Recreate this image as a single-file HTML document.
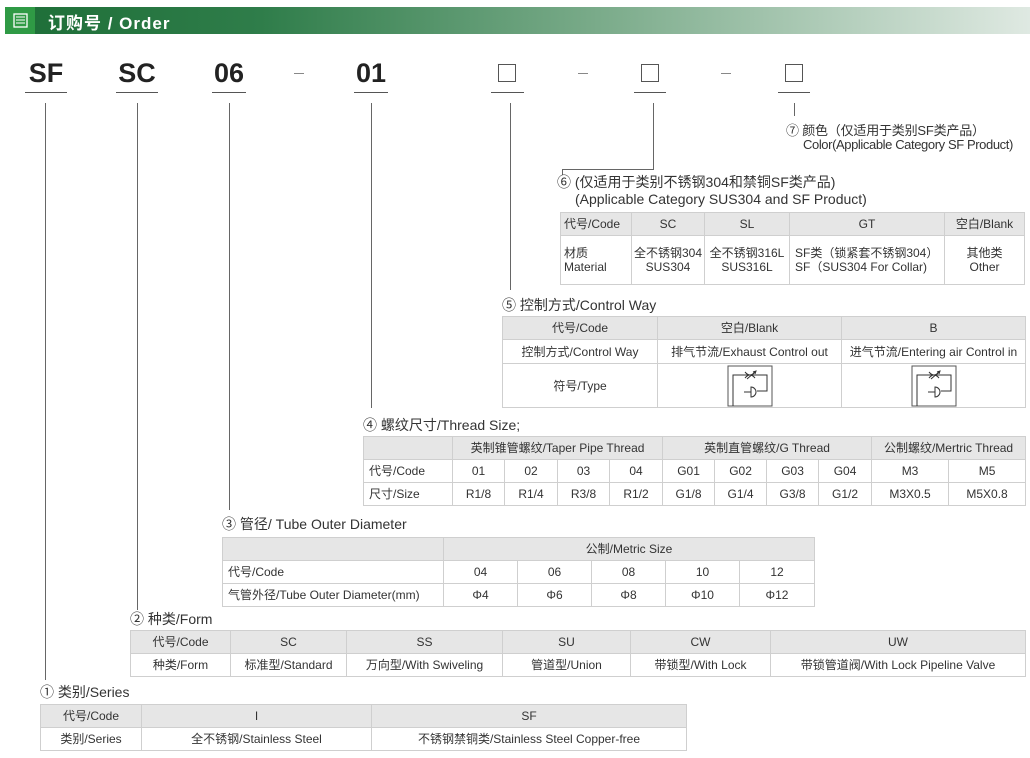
<!DOCTYPE html>
<html><head><meta charset="utf-8"><style>
*{margin:0;padding:0;box-sizing:border-box}
body{width:1030px;height:758px;background:#fff;position:relative;overflow:hidden;font-family:"Liberation Sans","Noto Sans CJK SC",sans-serif;color:#333}
.a{position:absolute}
.hdr{left:5px;top:7px;width:1025px;height:27px;background:linear-gradient(90deg,#1d6e37 0%,#2f7d4a 25%,#7fae8e 60%,#dfe9e2 100%)}
.ico{left:5px;top:7px;width:30px;height:27px;background:#2f9a45}
.title{left:48px;top:9px;color:#fff;font-weight:bold;font-size:17px;letter-spacing:1px}
.code{font-size:27px;font-weight:bold;color:#222;top:58px;text-align:center}
.ul{height:1px;background:#555;top:92px}
.vl{width:1px;background:#666}
.hl{height:1px;background:#666}
.box{width:18px;height:18px;border:1px solid #555;top:64px}
.dash{top:73px;width:10px;height:1px;background:#888}
.lbl{font-size:14px;color:#333;white-space:nowrap}
table{position:absolute;border-collapse:collapse;table-layout:fixed;font-size:12px;color:#333}
td{border:1px solid #cfcfcf;text-align:center;padding:0;line-height:14px;white-space:nowrap;overflow:hidden}
tr.h td{background:#e6e6e6}
</style></head><body>
<div class="a hdr"></div>
<div class="a ico"><svg width="30" height="27"><rect x="9" y="7" width="13" height="13" fill="none" stroke="#fff" stroke-width="1.3"/><path d="M11 10h9M11 13h9M11 16h9" stroke="#fff" stroke-width="1"/></svg></div>
<div class="a title">订购号 / Order</div>

<div class="a code" style="left:25px;width:42px">SF</div>
<div class="a code" style="left:116px;width:42px">SC</div>
<div class="a code" style="left:212px;width:34px">06</div>
<div class="a code" style="left:354px;width:34px">01</div>
<div class="a ul" style="left:25px;width:42px"></div>
<div class="a ul" style="left:116px;width:42px"></div>
<div class="a ul" style="left:212px;width:34px"></div>
<div class="a ul" style="left:354px;width:34px"></div>
<div class="a ul" style="left:491px;width:33px"></div>
<div class="a ul" style="left:634px;width:32px"></div>
<div class="a ul" style="left:778px;width:32px"></div>
<div class="a dash" style="left:294px"></div>
<div class="a dash" style="left:578px"></div>
<div class="a dash" style="left:721px"></div>
<div class="a box" style="left:498px"></div>
<div class="a box" style="left:641px"></div>
<div class="a box" style="left:785px"></div>

<div class="a vl" style="left:45px;top:103px;height:577px"></div>
<div class="a vl" style="left:137px;top:103px;height:507px"></div>
<div class="a vl" style="left:229px;top:103px;height:407px"></div>
<div class="a vl" style="left:371px;top:103px;height:305px"></div>
<div class="a vl" style="left:510px;top:103px;height:187px"></div>
<div class="a vl" style="left:653px;top:103px;height:67px"></div>
<div class="a hl" style="left:562px;top:169px;width:92px"></div>
<div class="a vl" style="left:562px;top:169px;height:6px"></div>
<div class="a vl" style="left:794px;top:103px;height:13px"></div>

<div class="a lbl" style="left:786px;top:120px;font-size:13px;letter-spacing:-0.2px">⑦ 颜色（仅适用于类别SF类产品）</div>
<div class="a lbl" style="left:803px;top:137px;font-size:13px;letter-spacing:-0.4px">Color(Applicable Category SF Product)</div>
<div class="a lbl" style="left:557px;top:172px">⑥ (仅适用于类别不锈钢304和禁铜SF类产品)</div>
<div class="a lbl" style="left:575px;top:191px">(Applicable Category SUS304 and SF Product)</div>

<table style="left:560px;top:212px;width:464px">
<col style="width:71px"><col style="width:73px"><col style="width:85px"><col style="width:155px"><col style="width:80px">
<tr class="h" style="height:23px"><td style="text-align:left;padding-left:3px">代号/Code</td><td>SC</td><td>SL</td><td>GT</td><td>空白/Blank</td></tr>
<tr style="height:49px"><td style="text-align:left;padding-left:3px">材质<br>Material</td><td>全不锈钢304<br>SUS304</td><td>全不锈钢316L<br>SUS316L</td><td style="text-align:left;padding-left:5px">SF类（锁紧套不锈钢304）<br>SF（SUS304 For Collar)</td><td>其他类<br>Other</td></tr>
</table>

<div class="a lbl" style="left:502px;top:295px">⑤ 控制方式/Control Way</div>
<table style="left:502px;top:316px;width:523px">
<col style="width:155px"><col style="width:184px"><col style="width:184px">
<tr class="h" style="height:23px"><td>代号/Code</td><td>空白/Blank</td><td>B</td></tr>
<tr style="height:24px"><td>控制方式/Control Way</td><td>排气节流/Exhaust Control out</td><td>进气节流/Entering air Control in</td></tr>
<tr style="height:44px"><td>符号/Type</td>
<td><svg width="46" height="42" viewBox="0 0 46 42" style="display:block;margin:0 auto"><rect x="1" y="1" width="44" height="40" fill="none" stroke="#555"/><path d="M6 41V10h34v16H30M10 10h8M28 10h8M18 7q5 6 10 0M18 13q5-6 10 0M20 14l8-7M26 7l3-1-1 3M17 27h7" fill="none" stroke="#333" stroke-width="1"/><path d="M24 22a5 5 0 1 1 0 10z" fill="none" stroke="#333"/></svg></td>
<td><svg width="46" height="42" viewBox="0 0 46 42" style="display:block;margin:0 auto"><rect x="1" y="1" width="44" height="40" fill="none" stroke="#555"/><path d="M6 41V10h34v16H30M10 10h8M28 10h8M18 7q5 6 10 0M18 13q5-6 10 0M20 14l8-7M26 7l3-1-1 3M17 27h7" fill="none" stroke="#333" stroke-width="1"/><path d="M24 22a5 5 0 1 1 0 10z" fill="none" stroke="#333"/></svg></td></tr>
</table>

<div class="a lbl" style="left:363px;top:415px">④ 螺纹尺寸/Thread Size;</div>
<table style="left:363px;top:436px;width:662px">
<col style="width:89px"><col style="width:52px"><col style="width:53px"><col style="width:52px"><col style="width:53px"><col style="width:52px"><col style="width:52px"><col style="width:52px"><col style="width:53px"><col style="width:77px"><col style="width:77px">
<tr class="h" style="height:23px"><td></td><td colspan="4">英制锥管螺纹/Taper Pipe Thread</td><td colspan="4">英制直管螺纹/G Thread</td><td colspan="2">公制螺纹/Mertric Thread</td></tr>
<tr style="height:23px"><td style="text-align:left;padding-left:5px">代号/Code</td><td>01</td><td>02</td><td>03</td><td>04</td><td>G01</td><td>G02</td><td>G03</td><td>G04</td><td>M3</td><td>M5</td></tr>
<tr style="height:23px"><td style="text-align:left;padding-left:5px">尺寸/Size</td><td>R1/8</td><td>R1/4</td><td>R3/8</td><td>R1/2</td><td>G1/8</td><td>G1/4</td><td>G3/8</td><td>G1/2</td><td>M3X0.5</td><td>M5X0.8</td></tr>
</table>

<div class="a lbl" style="left:222px;top:514px">③ 管径/ Tube Outer Diameter</div>
<table style="left:222px;top:537px;width:592px">
<col style="width:221px"><col style="width:74px"><col style="width:74px"><col style="width:74px"><col style="width:74px"><col style="width:75px">
<tr class="h" style="height:23px"><td></td><td colspan="5">公制/Metric Size</td></tr>
<tr style="height:23px"><td style="text-align:left;padding-left:5px">代号/Code</td><td>04</td><td>06</td><td>08</td><td>10</td><td>12</td></tr>
<tr style="height:23px"><td style="text-align:left;padding-left:5px">气管外径/Tube Outer Diameter(mm)</td><td>Φ4</td><td>Φ6</td><td>Φ8</td><td>Φ10</td><td>Φ12</td></tr>
</table>

<div class="a lbl" style="left:130px;top:609px">② 种类/Form</div>
<table style="left:130px;top:630px;width:895px">
<col style="width:100px"><col style="width:116px"><col style="width:156px"><col style="width:128px"><col style="width:140px"><col style="width:255px">
<tr class="h" style="height:23px"><td>代号/Code</td><td>SC</td><td>SS</td><td>SU</td><td>CW</td><td>UW</td></tr>
<tr style="height:23px"><td>种类/Form</td><td>标准型/Standard</td><td>万向型/With Swiveling</td><td>管道型/Union</td><td>带锁型/With Lock</td><td>带锁管道阀/With Lock Pipeline Valve</td></tr>
</table>

<div class="a lbl" style="left:40px;top:682px">① 类别/Series</div>
<table style="left:40px;top:704px;width:646px">
<col style="width:101px"><col style="width:230px"><col style="width:315px">
<tr class="h" style="height:23px"><td>代号/Code</td><td>I</td><td>SF</td></tr>
<tr style="height:23px"><td>类别/Series</td><td>全不锈钢/Stainless Steel</td><td>不锈钢禁铜类/Stainless Steel Copper-free</td></tr>
</table>
</body></html>
